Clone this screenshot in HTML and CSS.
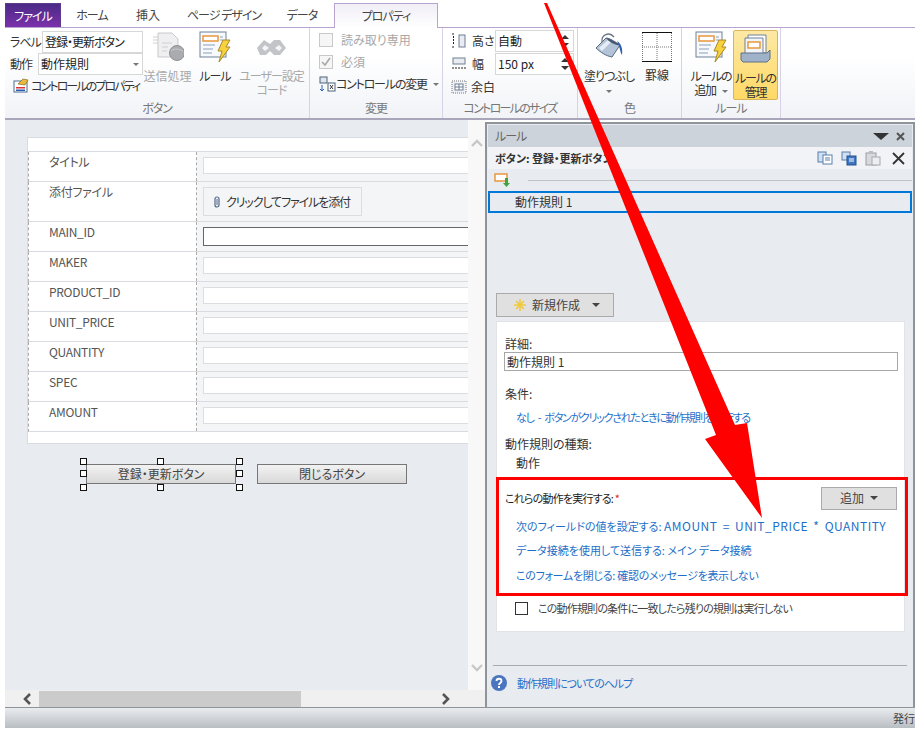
FILE: index.html
```html
<!DOCTYPE html>
<html lang="ja">
<head>
    <meta charset="UTF-8">
    <title>InfoPath Designer</title>
    <link rel="stylesheet" href="styles.css">
</head>
<body>
<svg class="defs" width="0" height="0">
    <symbol id="ruleIcon" viewBox="0 0 32 32">
        <rect x="1" y="1" width="26" height="25" fill="#f7f9fc" stroke="#6f8199"/>
        <rect x="4" y="5" width="15" height="5" fill="#fff" stroke="#e9973c" stroke-width="1.5"/>
        <path d="M4 14h12M4 18h10M4 22h9M21 6h3M21 9h3" stroke="#8ba0b8" fill="none"/>
        <path d="M24 9l7 0-4 7 4 0-11 15 3-11-4 0z" fill="#f8d23c" stroke="#a98a2a"/>
    </symbol>
</svg>

<div class="app">
    <div class="tabs">
        <div class="tab tab-file">ファイル</div>
        <div class="tab w-home">ホーム</div>
        <div class="tab w-insert">挿入</div>
        <div class="tab w-page">ページ デザイン</div>
        <div class="tab w-data">データ</div>
        <div class="tab tab-active">プロパティ</div>
    </div>

    <div class="ribbon">
        <div class="group g-button">
            <div class="group-body">
                <div class="col-fields">
                    <div class="field-row">
                        <span class="field-name">ラベル</span>
                        <span class="box box-label">登録・更新ボタン</span>
                    </div>
                    <div class="field-row">
                        <span class="field-name">動作</span>
                        <span class="box box-select">動作規則<i class="caret caret-grey"></i></span>
                    </div>
                    <div class="small-btn props-btn">
                        <svg width="16" height="15" viewBox="0 0 16 15"><rect x="1" y="3" width="13" height="11" fill="#fff" stroke="#4a6a94"/><rect x="3" y="9" width="9" height="1.5" fill="#d33"/><rect x="3" y="11.5" width="9" height="1.5" fill="#2b5fb3"/><path d="M5 6l5-5 5 1-3 5z" fill="#e8b93c" stroke="#8a6c1e" stroke-width=".7"/></svg>
                        コントロールのプロパティ
                    </div>
                </div>
                <div class="big-btn w-send disabled">
                    <svg width="32" height="32" viewBox="0 0 32 32"><path d="M6 2h14l6 6v18H6z" fill="#efeff1" stroke="#c9c9cd"/><path d="M1 6h5M1 9h5M1 12h5M10 12h10M10 16h6M10 20h5" stroke="#cfcfd3" fill="none"/><circle cx="25" cy="22" r="7.500" fill="#a9abaf" stroke="#8e9094"/><path d="M19 20c4-3 8-2 12 0" stroke="#c8cacd" fill="none"/></svg>
                    <span>送信処理</span>
                </div>
                <div class="big-btn w-rule">
                    <svg width="32" height="32"><use href="#ruleIcon"/></svg>
                    <span>ルール</span>
                </div>
                <div class="big-btn w-code disabled">
                    <svg width="32" height="32" viewBox="0 0 32 32"><path d="M8 9l6 4 4-4h6l6 8-6 7h-6l-4-4-4 4H4L1 17z" fill="#c3c4c8"/><path d="M6 17l3-3 4 3-4 3zM19 17l4-3 3 3-3 3z" fill="#f4f5f7"/></svg>
                    <span>ユーザー設定<br>コード</span>
                </div>
            </div>
            <div class="group-name">ボタン</div>
        </div>

        <div class="group g-change">
            <div class="group-body col-checks">
                <div class="check-row disabled"><i class="check"></i>読み取り専用</div>
                <div class="check-row disabled"><i class="check check-on"><svg width="12" height="12" viewBox="0 0 12 12"><path d="M2 6l3 3 5-7" fill="none" stroke="#a8a8a8" stroke-width="1.6"/></svg></i>必須</div>
                <div class="small-btn change-btn">
                    <svg width="17" height="17" viewBox="0 0 17 17"><rect x="1" y="1" width="7" height="6" fill="#dfe6ee" stroke="#4e6278"/><rect x="9" y="7" width="7" height="8" fill="#fff" stroke="#4e6278"/><path d="M3 9v6M1 13l2 2 2-2" stroke="#2b5fb3" fill="none"/><path d="M11 9l3 4M14 9l-3 4" stroke="#333"/></svg>
                    コントロールの変更<i class="caret caret-grey"></i>
                </div>
            </div>
            <div class="group-name">変更</div>
        </div>

        <div class="group g-size">
            <div class="group-body col-size">
                <div class="size-row">
                    <svg width="16" height="16" viewBox="0 0 16 16"><path d="M1 1h3M1 14h3M2.5 3v9" stroke="#222" stroke-dasharray="2 1" fill="none"/><rect x="8" y="2" width="6" height="12" fill="#e9edf2" stroke="#6f7f92"/></svg>
                    <span class="size-name">高さ</span>
                    <span class="box box-spin">自動<i class="spin"></i></span>
                </div>
                <div class="size-row">
                    <svg width="16" height="16" viewBox="0 0 16 16"><rect x="2" y="2" width="12" height="6" fill="#e9edf2" stroke="#6f7f92"/><path d="M1 12h14" stroke="#222" stroke-dasharray="2 1"/></svg>
                    <span class="size-name">幅</span>
                    <span class="box box-spin">150 px<i class="spin"></i></span>
                </div>
                <div class="size-row">
                    <svg width="16" height="16" viewBox="0 0 16 16"><rect x="1" y="2" width="14" height="12" fill="#eef1f5" stroke="#777" stroke-dasharray="1 1"/><rect x="4" y="5" width="8" height="6" fill="#fff" stroke="#6f7f92"/><path d="M8 5v6M4 8h8" stroke="#6f7f92"/></svg>
                    <span class="size-name size-margin">余白</span>
                </div>
            </div>
            <div class="group-name">コントロールのサイズ</div>
        </div>

        <div class="group g-color">
            <div class="group-body">
                <div class="big-btn w-fill">
                    <svg width="32" height="32" viewBox="0 0 32 32">
                        <path d="M3 17L13 7c4 0 9 4 14 7l-8 12c-6-1-12-5-16-9z" fill="#b4c4d8" stroke="#56687f"/>
                        <path d="M6 17l9-8 3 2-9 9z" fill="#e6edf5"/>
                        <path d="M13 7c3 0 10 4 14 7-4 1-11-3-14-7z" fill="#46586e"/>
                        <path d="M9 11c-1-7 7-11 12-5" fill="none" stroke="#6a7787" stroke-width="1.3"/>
                        <path d="M24 10c4 2 6 8 5 14-2-3-2-8-5-14z" fill="#2a5db0"/>
                    </svg>
                    <span>塗りつぶし<i class="caret caret-grey caret-line"></i></span>
                </div>
                <div class="big-btn w-border">
                    <svg class="grid-icon" width="30" height="30" viewBox="0 0 30 30"><path d="M0 .5h30M0 29.5h30" stroke="#111"/><path d="M.5 1v28M15 1v28M29.5 1v28M0 15h30" stroke="#777" stroke-dasharray="1 1"/></svg>
                    <span>罫線</span>
                </div>
            </div>
            <div class="group-name">色</div>
        </div>

        <div class="group g-rules">
            <div class="group-body">
                <div class="big-btn w-addrule">
                    <svg width="32" height="32"><use href="#ruleIcon"/></svg>
                    <span>ルールの<br>追加<i class="caret caret-grey"></i></span>
                </div>
                <div class="big-btn w-manage">
                    <svg width="32" height="32" viewBox="0 0 32 32"><path d="M8 2h18v18H8z" fill="#fff" stroke="#6f8199"/><path d="M5 5h18v16H5z" fill="#f1f4f8" stroke="#6f8199"/><rect x="8" y="9" width="12" height="6" fill="#fff" stroke="#e9973c" stroke-width="1.5"/><path d="M1 20h26l3-3v9l-3 3H3l-2-2z" fill="#9fb2c9" stroke="#5e7188"/></svg>
                    <span>ルールの<br>管理</span>
                </div>
            </div>
            <div class="group-name">ルール</div>
        </div>
    </div>

    <div class="main">
        <div class="left">
            <div class="left-top">
                <div class="canvas">
                    <div class="form">
                        <div class="form-edge"></div>
                        <div class="row"><div class="row-label">タイトル</div><div class="row-field"><div class="input"></div></div></div>
                        <div class="row row-tall"><div class="row-label">添付ファイル</div><div class="row-field"><div class="attach">
                            <svg width="8" height="12" viewBox="0 0 8 12"><path d="M2 3v6a2 2 0 0 0 4 0V3a2 2 0 0 0-4 0" fill="none" stroke="#51688a" stroke-width="1.2"/><path d="M4 3v6" stroke="#51688a"/></svg>
                            クリックしてファイルを添付</div></div></div>
                        <div class="row"><div class="row-label">MAIN_ID</div><div class="row-field"><div class="input input-focus"></div></div></div>
                        <div class="row"><div class="row-label">MAKER</div><div class="row-field"><div class="input"></div></div></div>
                        <div class="row"><div class="row-label">PRODUCT_ID</div><div class="row-field"><div class="input"></div></div></div>
                        <div class="row"><div class="row-label">UNIT_PRICE</div><div class="row-field"><div class="input"></div></div></div>
                        <div class="row"><div class="row-label">QUANTITY</div><div class="row-field"><div class="input"></div></div></div>
                        <div class="row"><div class="row-label">SPEC</div><div class="row-field"><div class="input"></div></div></div>
                        <div class="row"><div class="row-label">AMOUNT</div><div class="row-field"><div class="input"></div></div></div>
                        <div class="form-edge form-edge-end"></div>
                    </div>
                    <div class="form-buttons">
                        <div class="form-btn form-btn-sel">登録・更新ボタン
                            <i class="handle h-tl"></i><i class="handle h-tc"></i><i class="handle h-tr"></i>
                            <i class="handle h-ml"></i><i class="handle h-mr"></i>
                            <i class="handle h-bl"></i><i class="handle h-bc"></i><i class="handle h-br"></i>
                        </div>
                        <div class="form-btn">閉じるボタン</div>
                    </div>
                </div>
                <div class="vscroll">
                    <svg width="12" height="8" viewBox="0 0 12 8"><path d="M1 7l5-5 5 5" fill="none" stroke="#c8c8c8" stroke-width="2.4"/></svg>
                    <svg width="12" height="8" viewBox="0 0 12 8"><path d="M1 1l5 5 5-5" fill="none" stroke="#c8c8c8" stroke-width="2.4"/></svg>
                </div>
            </div>
            <div class="hscroll">
                <svg class="arrow-l" width="10" height="12" viewBox="0 0 10 12"><path d="M8 1L3 6l5 5" fill="none" stroke="#555" stroke-width="2.6"/></svg>
                <div class="thumb"></div>
                <svg class="arrow-r" width="10" height="12" viewBox="0 0 10 12"><path d="M2 1l5 5-5 5" fill="none" stroke="#555" stroke-width="2.6"/></svg>
            </div>
        </div>

        <div class="pane">
            <div class="pane-title">
                <span class="pane-title-text">ルール</span>
                <i class="pane-menu"></i>
                <svg width="9" height="9" viewBox="0 0 9 9"><path d="M1 1l7 7M8 1L1 8" stroke="#555" stroke-width="2"/></svg>
            </div>
            <div class="pane-sub">
                <span class="pane-sub-text">ボタン: 登録・更新ボタン</span>
                <svg width="16" height="14" viewBox="0 0 16 14"><rect x="1" y="1" width="8" height="10" fill="#cfe0f5" stroke="#5b7ea8"/><rect x="6" y="4" width="9" height="9" fill="#fff" stroke="#5b7ea8"/><path d="M8 7h5M8 9h5" stroke="#5b7ea8"/></svg>
                <svg width="16" height="15" viewBox="0 0 16 15"><rect x="1" y="1" width="8" height="8" fill="#cfe0f5" stroke="#5b7ea8"/><rect x="6" y="5" width="9" height="9" fill="#3f76c2" stroke="#27508c"/><path d="M8 8h5M8 10h5" stroke="#fff"/></svg>
                <svg width="16" height="15" viewBox="0 0 16 15"><rect x="1" y="2" width="10" height="12" fill="#d7d9dc" stroke="#9a9da1"/><rect x="4" y="0" width="4" height="3" fill="#b9bcc0"/><rect x="7" y="6" width="8" height="8" fill="#eceef0" stroke="#a6a9ad"/></svg>
                <svg class="pane-x" width="13" height="13" viewBox="0 0 13 13"><path d="M1 1l11 11M12 1L1 12" stroke="#333" stroke-width="1.8"/></svg>
            </div>
            <div class="rule-head">
                <svg width="16" height="14" viewBox="0 0 16 14"><rect x="1" y="1" width="12" height="7" fill="#fff" stroke="#e9973c" stroke-width="1.5"/><path d="M11 5v5H9l3.500 4 3.500-4h-2V5z" fill="#3fa33f"/></svg>
                <span class="rule-line"></span>
            </div>
            <div class="rule-item">動作規則 1</div>
            <div class="new-btn">
                <svg width="12" height="12" viewBox="0 0 12 12"><path d="M6 0v12M0 6h12M2 2l8 8M10 2l-8 8" stroke="#f0c93c" stroke-width="1.6"/></svg>
                新規作成<i class="caret"></i>
            </div>
            <div class="detail">
                <div class="d-label d-first">詳細:</div>
                <div class="d-input">動作規則 1</div>
                <div class="d-label d-cond">条件:</div>
                <div class="d-link d-link-cond">なし - ボタンがクリックされたときに動作規則を実行する</div>
                <div class="d-label d-type">動作規則の種類:</div>
                <div class="d-value">動作</div>
                <div class="d-action-head">
                    <span>これらの動作を実行する: <em>*</em></span>
                    <div class="add-btn">追加<i class="caret"></i></div>
                </div>
                <div class="d-link d-action d-action-first">次のフィールドの値を設定する: <span class="latin">AMOUNT = UNIT_PRICE * QUANTITY</span></div>
                <div class="d-link d-action">データ接続を使用して送信する: メイン データ接続</div>
                <div class="d-link d-action d-action-last">このフォームを閉じる: 確認のメッセージを表示しない</div>
                <div class="d-stop"><i class="stop-box"></i>この動作規則の条件に一致したら残りの規則は実行しない</div>
            </div>
            <div class="pane-foot">
                <svg width="16" height="16" viewBox="0 0 16 16"><circle cx="8" cy="8" r="8" fill="#4a76bf"/><path d="M5.500 6c0-3 5-3 5 0 0 2-2.500 2-2.500 4" fill="none" stroke="#fff" stroke-width="1.800"/><rect x="7" y="11" width="2" height="2" fill="#fff"/></svg>
                <span>動作規則についてのヘルプ</span>
            </div>
        </div>
    </div>

    <div class="status"><span>発行</span></div>

    <div class="callout"></div>
    <svg class="big-arrow" width="922" height="738" viewBox="0 0 922 738"><polygon points="544,3 547,3 735,425 747,423 762,518 705,439 716,435" fill="#ff0000"/></svg>
</div>
</body>
</html>
```

FILE: styles.css
```css
*{
    margin: 0;
    padding: 0;
    box-sizing: border-box;
}
html, body{
    width: 922px;
    height: 738px;
    overflow: hidden;
    background-color: #fff;
}
body{
    font-family: "Noto Sans CJK JP", "Liberation Sans", sans-serif;
    font-size: 12px;
    font-feature-settings: "palt";
    color: #333;
    line-height: 16px;
}
i{
    font-style: normal;
}
svg{
    flex: none;
    display: block;
}
.defs{
    position: absolute;
}
.app{
    width: 910px;
    height: 725px;
    margin: 3px 0 0 5px;
    display: flex;
    flex-direction: column;
}

/* tabs */
.tabs{
    height: 25px;
    display: flex;
    border-bottom: 1px solid #b7a5cf;
    flex: none;
}
.tab{
    text-align: center;
    line-height: 24px;
    color: #444;
    letter-spacing: -1px;
}
.tab-file{
    width: 56px;
    color: #fff;
    background: linear-gradient(#4b2a86, #7b31ab);
    border: 1px solid #5d3a8e;
    border-bottom: none;
}
.w-home{ width: 62px; }
.w-insert{ width: 50px; letter-spacing: 0; }
.w-page{ width: 102px; }
.w-data{ width: 54px; }
.tab-active{
    width: 104px;
    height: 25px;
    margin-left: 5px;
    background: linear-gradient(#f1eef7, #fff);
    border: 1px solid #b7a5cf;
    border-bottom: none;
}

/* ribbon */
.ribbon{
    height: 92px;
    flex: none;
    display: flex;
    background: linear-gradient(#fff 30%, #f1f3f7);
    border-bottom: 2px solid #a9a5bb;
}
.group{
    display: flex;
    flex-direction: column;
    border-right: 1px solid #d9d2e6;
    flex: none;
}
.group-body{
    height: 71px;
    display: flex;
    flex: none;
}
.group-name{
    text-align: center;
    color: #777;
    line-height: 17px;
    letter-spacing: -1px;
}
.g-button{ width: 305px; }
.g-change{ width: 133px; }
.g-size{ width: 135px; }
.g-size .group-name{ letter-spacing: -1.7px; }
.g-color{ width: 104px; }
.g-rules{ width: 99px; }
.disabled{
    color: #a8a8a8;
}
.col-fields{
    width: 138px;
    padding: 3px 0 0 5px;
}
.field-row{
    display: flex;
    height: 22px;
    align-items: center;
    justify-content: space-between;
}
.field-name{
    white-space: nowrap;
    letter-spacing: -1px;
}
.box{
    display: flex;
    align-items: center;
    height: 100%;
    background-color: #fff;
    border: 1px solid #d7d7d7;
    padding-left: 2px;
    color: #222;
    white-space: nowrap;
}
.box-label{
    width: 101px;
    letter-spacing: -1px;
}
.box-select{
    width: 105px;
    justify-content: space-between;
    padding-right: 3px;
}
.caret{
    display: inline-block;
    width: 0;
    height: 0;
    border-left: 4px solid transparent;
    border-right: 4px solid transparent;
    border-top: 4px solid #444;
    margin-left: 6px;
    vertical-align: 2px;
}
.caret-grey{
    border-left-width: 3px;
    border-right-width: 3px;
    border-top: 3px solid #777;
}
.caret-line{
    display: block;
    margin: 7px auto 0;
}
.small-btn{
    display: flex;
    align-items: center;
    white-space: nowrap;
}
.props-btn{
    margin: 2px 0 0 3px;
    height: 17px;
    gap: 2px;
    letter-spacing: -1.9px;
}
.big-btn{
    display: flex;
    flex-direction: column;
    align-items: center;
    padding-top: 3px;
    flex: none;
    text-align: center;
    line-height: 14px;
    white-space: nowrap;
}
.big-btn span{
    display: block;
    margin-top: 6px;
    letter-spacing: -1px;
}
.w-send{ width: 49px; }
.w-send span{ letter-spacing: 0; }
.w-rule{ width: 46px; color: #333; }
.w-code{ width: 67px; }

.col-checks{
    flex-direction: column;
    padding: 1px 0 0 9px;
}
.check-row{
    display: flex;
    align-items: center;
    height: 22px;
    gap: 8px;
}
.check{
    display: block;
    width: 14px;
    height: 14px;
    border: 1px solid #c8c8c8;
    background-color: #f6f6f6;
}
.change-btn{
    height: 20px;
    margin-top: 1px;
    letter-spacing: -1.2px;
}
.change-btn .caret{
    margin-left: 6px;
}

.col-size{
    flex-direction: column;
    padding: 1px 0 0 8px;
}
.size-row{
    display: flex;
    align-items: center;
    height: 23px;
}
.size-name{
    width: 28px;
    padding-left: 5px;
    color: #333;
}
.size-margin{
    width: 40px;
    padding-left: 4px;
}
.box-spin{
    width: 79px;
    height: 22px;
    justify-content: space-between;
    padding-right: 4px;
}
.spin{
    display: block;
    width: 8px;
    height: 14px;
    position: relative;
}
.spin::before, .spin::after{
    content: "";
    position: absolute;
    left: 0;
    border-left: 4px solid transparent;
    border-right: 4px solid transparent;
}
.spin::before{
    top: 1px;
    border-bottom: 4px solid #333;
}
.spin::after{
    bottom: 1px;
    border-top: 4px solid #333;
}
.w-fill{ width: 62px; }
.w-border{ width: 34px; padding-top: 4px; }
.w-border span{ margin-top: 6px; letter-spacing: 0; }

.g-rules .group-body{
    padding-left: 7px;
}
.w-addrule{ width: 44px; }
.w-addrule span, .w-manage span{ letter-spacing: -1.3px; }
.w-manage{
    width: 45px;
    height: 70px;
    margin-top: 2px;
    padding-top: 2px;
    background: linear-gradient(#fde9a5, #ffd966);
    border: 1px solid #d8b45a;
    border-radius: 2px;
}

/* main area */
.main{
    flex: 1;
    display: flex;
    border-bottom: 1px solid #8f949a;
    min-height: 0;
}
.left{
    width: 480px;
    flex: none;
    display: flex;
    flex-direction: column;
}
.left-top{
    flex: 1;
    display: flex;
    min-height: 0;
}
.canvas{
    width: 463px;
    overflow: hidden;
    background-color: #e8ebf0;
    padding: 17px 0 0 22px;
}
.form{
    width: 470px;
    background-color: #fff;
    border: 1px solid #d8dbdf;
}
.form-edge{
    height: 14px;
    border-bottom: 1px solid #d8dbdf;
}
.form-edge-end{
    height: 11px;
    border-bottom: none;
}
.row{
    display: flex;
    height: 30px;
    border-bottom: 1px solid #d8dbdf;
    border-left: 1px dashed #aaa;
}
.row-tall{
    height: 40px;
}
.row-label{
    width: 168px;
    flex: none;
    padding: 2px 0 0 20px;
    color: #555;
    letter-spacing: -.3px;
    border-right: 1px dashed #aaa;
}
.row-field{
    flex: 1;
    background-color: #f4f5f7;
    padding: 5px 0 0 6px;
}
.input{
    height: 17px;
    background-color: #fff;
    border: 1px solid #dcdde0;
}
.input-focus{
    height: 19px;
    border-color: #666;
}
.attach{
    width: 159px;
    height: 29px;
    display: flex;
    align-items: center;
    gap: 5px;
    padding-left: 9px;
    border: 1px solid #dcdde0;
    color: #333;
    white-space: nowrap;
    letter-spacing: -1.1px;
}
.form-buttons{
    display: flex;
    gap: 21px;
    margin: 20px 0 0 59px;
}
.form-btn{
    position: relative;
    width: 150px;
    height: 20px;
    text-align: center;
    line-height: 18px;
    border: 1px solid #777;
    background: linear-gradient(#f2f2f2, #d9d9d9);
    color: #444;
}
.handle{
    position: absolute;
    width: 7px;
    height: 7px;
    background-color: #fff;
    border: 1px solid #111;
}
.h-tl, .h-tc, .h-tr{ top: -7px; }
.h-ml, .h-mr{ top: 5px; }
.h-bl, .h-bc, .h-br{ top: 19px; }
.h-tl, .h-ml, .h-bl{ left: -7px; }
.h-tc, .h-bc{ left: 70px; }
.h-tr, .h-mr, .h-br{ left: 149px; }

.vscroll{
    width: 17px;
    background-color: #f8f8f8;
    display: flex;
    flex-direction: column;
    justify-content: space-between;
    align-items: center;
    padding: 19px 0 18px;
}
.hscroll{
    height: 17px;
    flex: none;
    display: flex;
    align-items: center;
    background-color: #f0f0f0;
}
.arrow-l{ margin-left: 17px; }
.thumb{
    width: 262px;
    height: 16px;
    margin-left: 7px;
    background-color: #cbcbcb;
}
.arrow-r{ margin-left: 140px; }

/* rules pane */
.pane{
    width: 430px;
    margin-top: 2px;
    border: 2px solid #8f949a;
    border-bottom: none;
    padding: 1px 1px 0;
    background-color: #e8ebf0;
    display: flex;
    flex-direction: column;
}
.pane-title{
    height: 22px;
    flex: none;
    display: flex;
    align-items: center;
    background-color: #ccd3da;
    padding: 0 7px;
    color: #666;
}
.pane-title-text{
    flex: 1;
    letter-spacing: -1px;
}
.pane-menu{
    width: 0;
    height: 0;
    border-left: 8px solid transparent;
    border-right: 8px solid transparent;
    border-top: 7px solid #333;
    margin-right: 7px;
}
.pane-sub{
    height: 22px;
    flex: none;
    display: flex;
    align-items: center;
    gap: 8px;
    background-color: #f1f3f6;
    padding: 0 7px;
}
.pane-sub-text{
    flex: 1;
    font-weight: 700;
    font-size: 11px;
    color: #333;
}
.pane-x{
    margin-left: 3px;
}
.rule-head{
    height: 22px;
    flex: none;
    display: flex;
    align-items: center;
    padding-left: 6px;
}
.rule-line{
    flex: 1;
    height: 1px;
    margin-left: 18px;
    background-color: #bfc3c8;
}
.rule-item{
    height: 22px;
    flex: none;
    line-height: 18px;
    padding-left: 25px;
    border: 2px solid #0078d7;
    color: #333;
}
.new-btn{
    width: 118px;
    height: 24px;
    flex: none;
    display: flex;
    align-items: center;
    justify-content: center;
    gap: 6px;
    margin: 80px 0 0 8px;
    padding-left: 4px;
    background-color: #e0e0e0;
    border: 1px solid #aaa;
    color: #444;
}
.detail{
    width: 409px;
    height: 311px;
    flex: none;
    margin: 4px 0 0 8px;
    background-color: #fff;
    border: 1px solid #e2e3e6;
    padding: 0 7px 0 8px;
}
.d-first{
    margin-top: 14px;
}
.d-input{
    width: 394px;
    height: 19px;
    margin-left: -1px;
    border: 1px solid #a8a8a8;
    line-height: 17px;
    padding-left: 2px;
}
.d-cond{
    margin-top: 15px;
}
.d-link{
    color: #1e6fc8;
    padding-left: 11px;
    white-space: nowrap;
    font-size: 11px;
}
.d-link-cond{
    margin-top: 7px;
    letter-spacing: -1.3px;
    word-spacing: 3px;
}
.d-type{
    margin-top: 11px;
}
.d-value{
    padding-left: 11px;
    margin-top: 3px;
}
.d-action-head{
    height: 24px;
    margin-top: 15px;
    display: flex;
    align-items: center;
    justify-content: space-between;
    color: #222;
    font-size: 11px;
    letter-spacing: -.8px;
}
.d-action-head em{
    color: #e02020;
    font-style: normal;
}
.add-btn{
    width: 76px;
    height: 23px;
    display: flex;
    align-items: center;
    justify-content: center;
    background-color: #e0e0e0;
    border: 1px solid #aaa;
    color: #444;
    font-size: 12px;
    letter-spacing: 0;
}
.d-action{
    height: 25px;
    line-height: 25px;
}
.d-action-first{
    margin-top: 3px;
}
.d-action-last{
    letter-spacing: -.3px;
}
.latin{
    font-size: 12px;
    letter-spacing: .5px;
    word-spacing: 2px;
}
.d-stop{
    display: flex;
    align-items: center;
    gap: 10px;
    margin: 12px 0 0 10px;
    color: #444;
    white-space: nowrap;
    font-size: 11px;
    letter-spacing: -.8px;
}
.stop-box{
    width: 13px;
    height: 13px;
    flex: none;
    background-color: #fff;
    border: 1px solid #333;
}
.pane-foot{
    margin: 33px 5px 0;
    flex: none;
    display: flex;
    align-items: center;
    gap: 10px;
    border-top: 1px solid #a8abb0;
    padding: 9px 0 0 0;
    color: #1e6fc8;
    font-size: 11px;
    letter-spacing: -1px;
}
.pane-foot svg{
    margin-left: -2px;
}

/* status bar */
.status{
    height: 20px;
    flex: none;
    display: flex;
    justify-content: flex-end;
    align-items: center;
    overflow: hidden;
    background: linear-gradient(#e9ecef, #b9bec3);
    color: #444;
    font-size: 11px;
}
.status span{
    width: 22px;
    white-space: nowrap;
}

/* red annotation */
.callout{
    position: absolute;
    left: 496px;
    top: 477px;
    width: 412px;
    height: 119px;
    border: 3px solid #f00;
}
.big-arrow{
    position: absolute;
    left: 0;
    top: 0;
}
```
